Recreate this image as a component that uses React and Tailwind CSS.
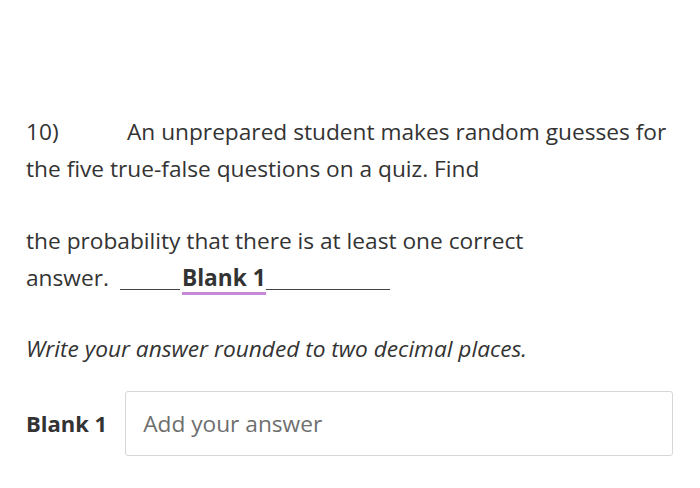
export default function App() {
  return (
    <div
      className="w-[700px] h-[488px] bg-white text-[#333] overflow-hidden"
      style={{ fontFamily: '"Open Sans", sans-serif' }}
    >
      <div className="pt-[113px] pl-[26px] pr-2 text-[22.7px] leading-[37px]">
        <p className="whitespace-nowrap">
          <span className="inline-block w-[101px]">10)</span>An unprepared student makes random guesses for
          <br />
          the five true-false questions on a quiz. Find
        </p>
        <p className="mt-[35px] whitespace-nowrap">
          the probability that there is at least one correct
          <br />
          answer.
          <span className="inline-block w-[60px] ml-[11px] border-b border-[#444] h-[4px] align-baseline translate-y-[4px]"></span>
          <span className="relative font-bold ml-[2px]">
            Blank 1
            <span className="absolute left-0 right-0 top-full -mt-[1px] h-[3px] bg-[#c58ad6]"></span>
          </span>
          <span className="inline-block w-[124px] border-b border-[#444] h-[4px] align-baseline translate-y-[4px]"></span>
        </p>
        <p className="mt-[34px] italic">Write your answer rounded to two decimal places.</p>
        <div className="mt-[24px] flex items-center gap-[18px]">
          <span className="font-bold text-[22px]">Blank 1</span>
          <div className="w-[548px] h-[65px] border border-[#d6d6d6] rounded-[3px] flex items-center px-[17px]">
            <span className="text-[#6e6e6e]">Add your answer</span>
          </div>
        </div>
      </div>
    </div>
  );
}
